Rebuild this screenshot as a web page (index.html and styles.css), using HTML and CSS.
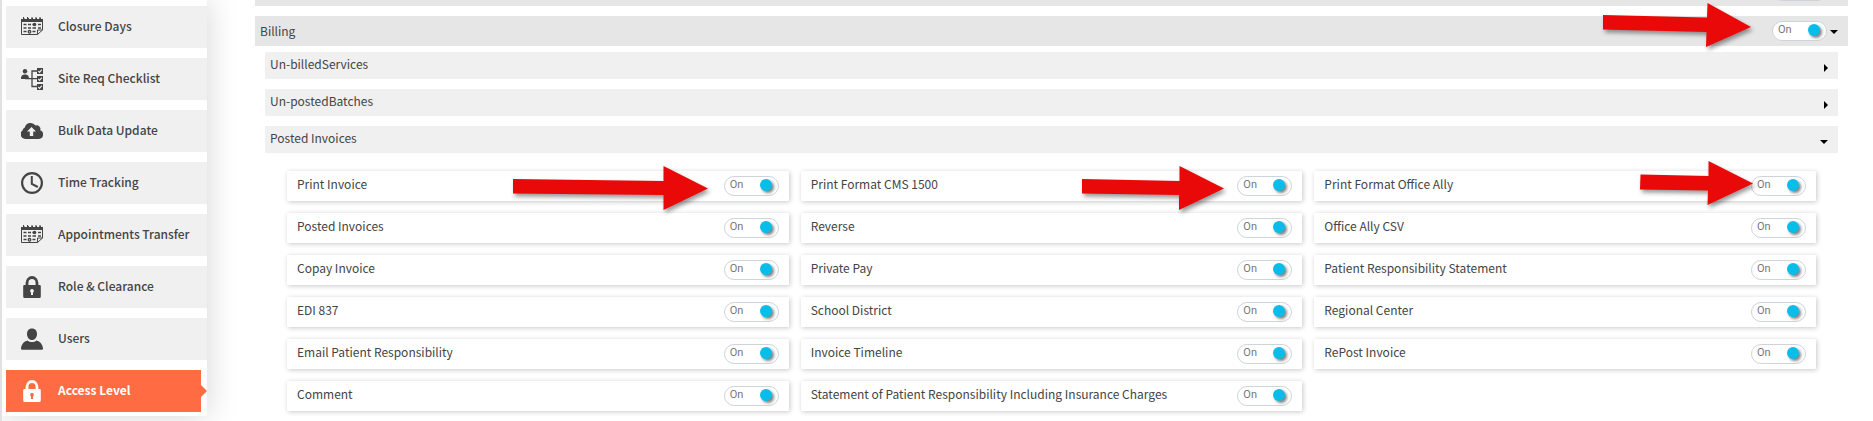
FILE: index.html
```
<!DOCTYPE html>
<html lang="en">
<head>
  <meta charset="UTF-8">
  <meta name="viewport" content="width=device-width, initial-scale=1.0">
  <title>Access Level</title>
  <link rel="stylesheet" href="styles.css">
</head>
<body>
  <svg class="icon-defs" aria-hidden="true">
    <symbol id="icon-calendar" viewBox="0 0 22 22">
      <path fill="currentColor" d="M0 3h2V2h1.500v1h3V2H8v1h2.500V2H12v1h2.500V2H16v1h2.500V2H20v1h2v3H0z"/>
      <path fill="none" stroke="currentColor" d="M.5 5v13.500h16l5-4.500V5M16.500 18.500V14h5"/>
      <path fill="none" stroke="currentColor" stroke-width="1.500" d="M2.500 8.500h3M7 8.500h3M11.500 8.500h3.500M17 8.500h3M2.500 12h3M7 12h3M11.500 12h3.500M17 12h3M2.500 15.500h3M11.500 15.500h3"/>
      <circle cx="13.500" cy="8.500" r="1.800" fill="currentColor"/>
      <circle cx="8.500" cy="15.800" r="1.300" fill="none" stroke="currentColor" stroke-width="1.300"/>
      <path stroke="currentColor" d="M2.500 1v3M6.500 1v3M11 1v3M15 1v3M19 1v3"/>
    </symbol>
    <symbol id="icon-checklist" viewBox="0 0 22 22">
      <circle cx="4" cy="3.200" r="2.200" fill="currentColor"/>
      <path fill="currentColor" d="M0 11c0-3.500 1.500-4.500 4-4.500S8 7.500 8 11zM16 0h6v6h-6zM16 8h6v6h-6zM16 16h6v6h-6z"/>
      <path fill="none" stroke="currentColor" stroke-width="1.300" d="M4 10.600h12M16 3h-5v15.500h5"/>
      <path class="icon-tick" fill="none" stroke-width="1.200" d="M17.300 3l1.300 1.300 2.200-2.600M17.300 11l1.300 1.300 2.200-2.600M17.300 19l1.300 1.300 2.200-2.600"/>
    </symbol>
    <symbol id="icon-cloud" viewBox="0 0 22 22">
      <path fill="currentColor" fill-rule="evenodd" d="M4.500 19A4.700 4.700 0 0 1 1.500 10.500 3.800 3.800 0 0 1 3.800 7.500 6 6 0 0 1 14.500 5.500a3.700 3.700 0 0 1 4.700 4.800A4.500 4.500 0 0 1 18 19zM10.500 7L6 11.500h2.800V16h3.400v-4.500H15z"/>
    </symbol>
    <symbol id="icon-clock" viewBox="0 0 22 22">
      <circle cx="11" cy="11" r="9.900" fill="none" stroke="currentColor" stroke-width="2.200"/>
      <path fill="none" stroke="currentColor" stroke-width="2" d="M10.800 4v8l6 3"/>
    </symbol>
    <symbol id="icon-lock" viewBox="0 0 22 22">
      <path fill="none" stroke="currentColor" stroke-width="2.800" d="M6 10V7a5 5.500 0 0 1 10 0v3"/>
      <path fill="currentColor" fill-rule="evenodd" d="M3.500 9h15a1.300 1.300 0 0 1 1.300 1.300v10.200a1.500 1.500 0 0 1-1.500 1.500H3.700a1.500 1.500 0 0 1-1.500-1.500V10.300A1.300 1.300 0 0 1 3.500 9zM11 13a1.900 1.900 0 0 0-1 3.500V19h2v-2.500a1.900 1.900 0 0 0-1-3.500z"/>
    </symbol>
    <symbol id="icon-user" viewBox="0 0 22 22">
      <path fill="currentColor" d="M11 0.500c3.200 0 5 2.200 5 5.500s-2 6-5 6-5-2.700-5-6 1.800-5.500 5-5.500zM0 20.500C.3 16.500 3 13.200 6.500 12.500c2.500 2 6.500 2 9 0 3.500.7 6.200 4 6.500 8 0 1-.5 1.300-1.500 1.300h-19C.5 21.800 0 21.500 0 20.500z"/>
    </symbol>
  </svg>

  <div class="page">
    <nav class="sidebar">
      <a href="#" class="nav-item"><svg class="nav-icon"><use href="#icon-calendar"/></svg><span>Closure Days</span></a>
      <a href="#" class="nav-item"><svg class="nav-icon"><use href="#icon-checklist"/></svg><span>Site Req Checklist</span></a>
      <a href="#" class="nav-item"><svg class="nav-icon"><use href="#icon-cloud"/></svg><span>Bulk Data Update</span></a>
      <a href="#" class="nav-item"><svg class="nav-icon"><use href="#icon-clock"/></svg><span>Time Tracking</span></a>
      <a href="#" class="nav-item"><svg class="nav-icon"><use href="#icon-calendar"/></svg><span>Appointments Transfer</span></a>
      <a href="#" class="nav-item"><svg class="nav-icon"><use href="#icon-lock"/></svg><span>Role &amp; Clearance</span></a>
      <a href="#" class="nav-item"><svg class="nav-icon"><use href="#icon-user"/></svg><span>Users</span></a>
      <a href="#" class="nav-item active"><svg class="nav-icon"><use href="#icon-lock"/></svg><span>Access Level</span></a>
    </nav>

    <main class="content">
      <div class="module previous">
        <span class="toggle"><input type="checkbox" aria-label="Previous module" checked></span>
        <button class="caret-button" aria-label="Expand"><span class="caret down"></span></button>
      </div>

      <div class="module">
        <label for="billing">Billing</label>
        <svg class="arrow arrow-module" viewBox="0 0 148 44"><path d="M0 12l104 2.500L104.500 0 148 24l-45 20 .5-15L0 26.500z"/></svg>
        <span class="toggle"><input type="checkbox" id="billing" checked><span>On</span></span>
        <button class="caret-button" aria-label="Collapse"><span class="caret down"></span></button>
      </div>

      <div class="sections">
        <button class="section">Un-billedServices<span class="caret right"></span></button>
        <button class="section">Un-postedBatches<span class="caret right"></span></button>
        <button class="section">Posted Invoices<span class="caret down"></span></button>

        <div class="permissions">
          <div class="permission">
            <label for="print-invoice">Print Invoice</label>
            <svg class="arrow arrow-invoice" viewBox="0 0 195 44"><path d="M0 13l150.500 2V0L195 22.500 150.500 44V29L0 27.500z"/></svg>
            <span class="toggle"><input type="checkbox" id="print-invoice" checked><span>On</span></span>
          </div>
          <div class="permission">
            <label for="print-cms">Print Format CMS 1500</label>
            <svg class="arrow arrow-cms" viewBox="0 0 142 44"><path d="M0 13l97.500 2V0L142 22.500 97 44V29L0 27.500z"/></svg>
            <span class="toggle"><input type="checkbox" id="print-cms" checked><span>On</span></span>
          </div>
          <div class="permission">
            <label for="print-ally">Print Format Office Ally</label>
            <svg class="arrow arrow-ally" viewBox="0 0 113 44"><path d="M.5 13.500l68 1.500V0L113 22.500 67.500 44l.5-14.500L0 28.500z"/></svg>
            <span class="toggle"><input type="checkbox" id="print-ally" checked><span>On</span></span>
          </div>
          <div class="permission">
            <label for="posted">Posted Invoices</label>
            <span class="toggle"><input type="checkbox" id="posted" checked><span>On</span></span>
          </div>
          <div class="permission">
            <label for="reverse">Reverse</label>
            <span class="toggle"><input type="checkbox" id="reverse" checked><span>On</span></span>
          </div>
          <div class="permission">
            <label for="ally-csv">Office Ally CSV</label>
            <span class="toggle"><input type="checkbox" id="ally-csv" checked><span>On</span></span>
          </div>
          <div class="permission">
            <label for="copay">Copay Invoice</label>
            <span class="toggle"><input type="checkbox" id="copay" checked><span>On</span></span>
          </div>
          <div class="permission">
            <label for="private-pay">Private Pay</label>
            <span class="toggle"><input type="checkbox" id="private-pay" checked><span>On</span></span>
          </div>
          <div class="permission">
            <label for="patient-statement">Patient Responsibility Statement</label>
            <span class="toggle"><input type="checkbox" id="patient-statement" checked><span>On</span></span>
          </div>
          <div class="permission">
            <label for="edi">EDI 837</label>
            <span class="toggle"><input type="checkbox" id="edi" checked><span>On</span></span>
          </div>
          <div class="permission">
            <label for="school">School District</label>
            <span class="toggle"><input type="checkbox" id="school" checked><span>On</span></span>
          </div>
          <div class="permission">
            <label for="regional">Regional Center</label>
            <span class="toggle"><input type="checkbox" id="regional" checked><span>On</span></span>
          </div>
          <div class="permission">
            <label for="email">Email Patient Responsibility</label>
            <span class="toggle"><input type="checkbox" id="email" checked><span>On</span></span>
          </div>
          <div class="permission">
            <label for="timeline">Invoice Timeline</label>
            <span class="toggle"><input type="checkbox" id="timeline" checked><span>On</span></span>
          </div>
          <div class="permission">
            <label for="repost">RePost Invoice</label>
            <span class="toggle"><input type="checkbox" id="repost" checked><span>On</span></span>
          </div>
          <div class="permission">
            <label for="comment">Comment</label>
            <span class="toggle"><input type="checkbox" id="comment" checked><span>On</span></span>
          </div>
          <div class="permission">
            <label for="statement-charges">Statement of Patient Responsibility Including Insurance Charges</label>
            <span class="toggle"><input type="checkbox" id="statement-charges" checked><span>On</span></span>
          </div>
        </div>
      </div>
    </main>
  </div>
</body>
</html>
```

FILE: styles.css
```
* {
  box-sizing: border-box;
}
body {
  margin: 0;
  font-family: "Noto Sans CJK SC", "Open Sans", sans-serif;
  font-size: 12px;
  color: #444;
  background: #fff;
}
button {
  font: inherit;
  color: inherit;
  border: none;
  cursor: pointer;
}
.icon-defs {
  display: none;
}
.page {
  display: flex;
  align-items: flex-start;
  min-height: 100vh;
  overflow: hidden;
  border-left: 2px solid #e1e1e1;
}

/* Sidebar */
.sidebar {
  display: flex;
  flex-direction: column;
  gap: 10px;
  flex: none;
  width: 205px;
  padding: 6px 0 4px 4px;
  background: #fff;
  box-shadow: 0 0 30px rgba(0, 0, 0, 0.17);
}
.nav-item {
  display: flex;
  align-items: center;
  gap: 15px;
  height: 42px;
  padding-left: 15px;
  background: #f0f0f0;
  color: #444;
  font-weight: 500;
  text-decoration: none;
  white-space: nowrap;
}
.nav-item span {
  padding-bottom: 4px;
}
.nav-icon {
  flex: none;
  width: 22px;
  height: 22px;
}
.icon-tick {
  stroke: #f0f0f0;
}
.nav-item.active {
  position: relative;
  margin-right: 6px;
  background: #ff6c43;
  color: #fff;
  font-weight: bold;
}
.nav-item.active::after {
  content: "";
  position: absolute;
  left: 100%;
  top: 15px;
  border: 6px solid transparent;
  border-left-color: #ff6c43;
  border-right: none;
}

/* Content */
.content {
  flex: 1;
  padding: 0 25px 0 48px;
}
.module {
  position: relative;
  display: flex;
  justify-content: flex-end;
  align-items: center;
  height: 30px;
  padding: 0 10px 0 5px;
  background: #e6e6e6;
}
.module.previous {
  margin: -24px 0 10px;
}
.module label {
  flex: 1;
  padding-bottom: 2px;
}
.caret-button {
  display: flex;
  padding: 2px 0 0 3px;
  background: none;
}
.caret {
  border: 4px solid transparent;
}
.caret.down {
  border-top-color: #000;
  border-bottom: none;
}
.caret.right {
  border-left-color: #000;
  border-right: none;
}
.sections {
  padding: 6px 10px 0;
}
.section {
  display: flex;
  justify-content: space-between;
  align-items: flex-start;
  width: 100%;
  height: 27px;
  margin-bottom: 10px;
  padding: 0 10px 0 5px;
  background: #f0f0f0;
  line-height: 24px;
}
.section .caret {
  margin-top: 12px;
}
.section .caret.down {
  margin-top: 14px;
}
.permissions {
  display: grid;
  grid-template-columns: repeat(3, 1fr);
  gap: 12px;
  padding: 8px 22px;
}
.permission {
  position: relative;
  display: flex;
  justify-content: space-between;
  align-items: center;
  height: 30px;
  padding: 0 10px;
  box-shadow: 1px 1px 5px rgba(0, 0, 0, 0.22);
  border-radius: 1px;
}
.permission label {
  line-height: 20px;
  padding-bottom: 4px;
}

/* On / off toggle */
.toggle {
  position: relative;
  display: flex;
  width: 55px;
  height: 20px;
}
.toggle input {
  appearance: none;
  display: flex;
  justify-content: flex-end;
  width: 100%;
  height: 100%;
  margin: 0;
  padding: 2px 6px;
  border: 1px solid #ced4da;
  border-radius: 10px;
  background: #fff;
  cursor: pointer;
}
.toggle input::after {
  content: "";
  width: 12px;
  height: 12px;
  border-radius: 50%;
  background: #09bdea;
  box-shadow: 2px 2px 3px rgba(0, 0, 0, 0.5);
}
.toggle span {
  position: absolute;
  left: 6px;
  top: 0;
  font-family: Roboto, sans-serif;
  font-size: 11px;
  line-height: 17px;
  color: #777;
  pointer-events: none;
}

/* Callout arrows */
.arrow {
  position: absolute;
  height: 44px;
  fill: #e90909;
  filter: drop-shadow(2px 3px 2px rgba(0, 0, 0, 0.4));
  pointer-events: none;
  z-index: 1;
}
.arrow-module {
  top: -13px;
  right: 97px;
  width: 148px;
}
.arrow-invoice {
  top: -5px;
  right: 81px;
  width: 195px;
}
.arrow-cms {
  top: -5px;
  right: 78px;
  width: 142px;
}
.arrow-ally {
  top: -10px;
  right: 63px;
  width: 113px;
}
```
